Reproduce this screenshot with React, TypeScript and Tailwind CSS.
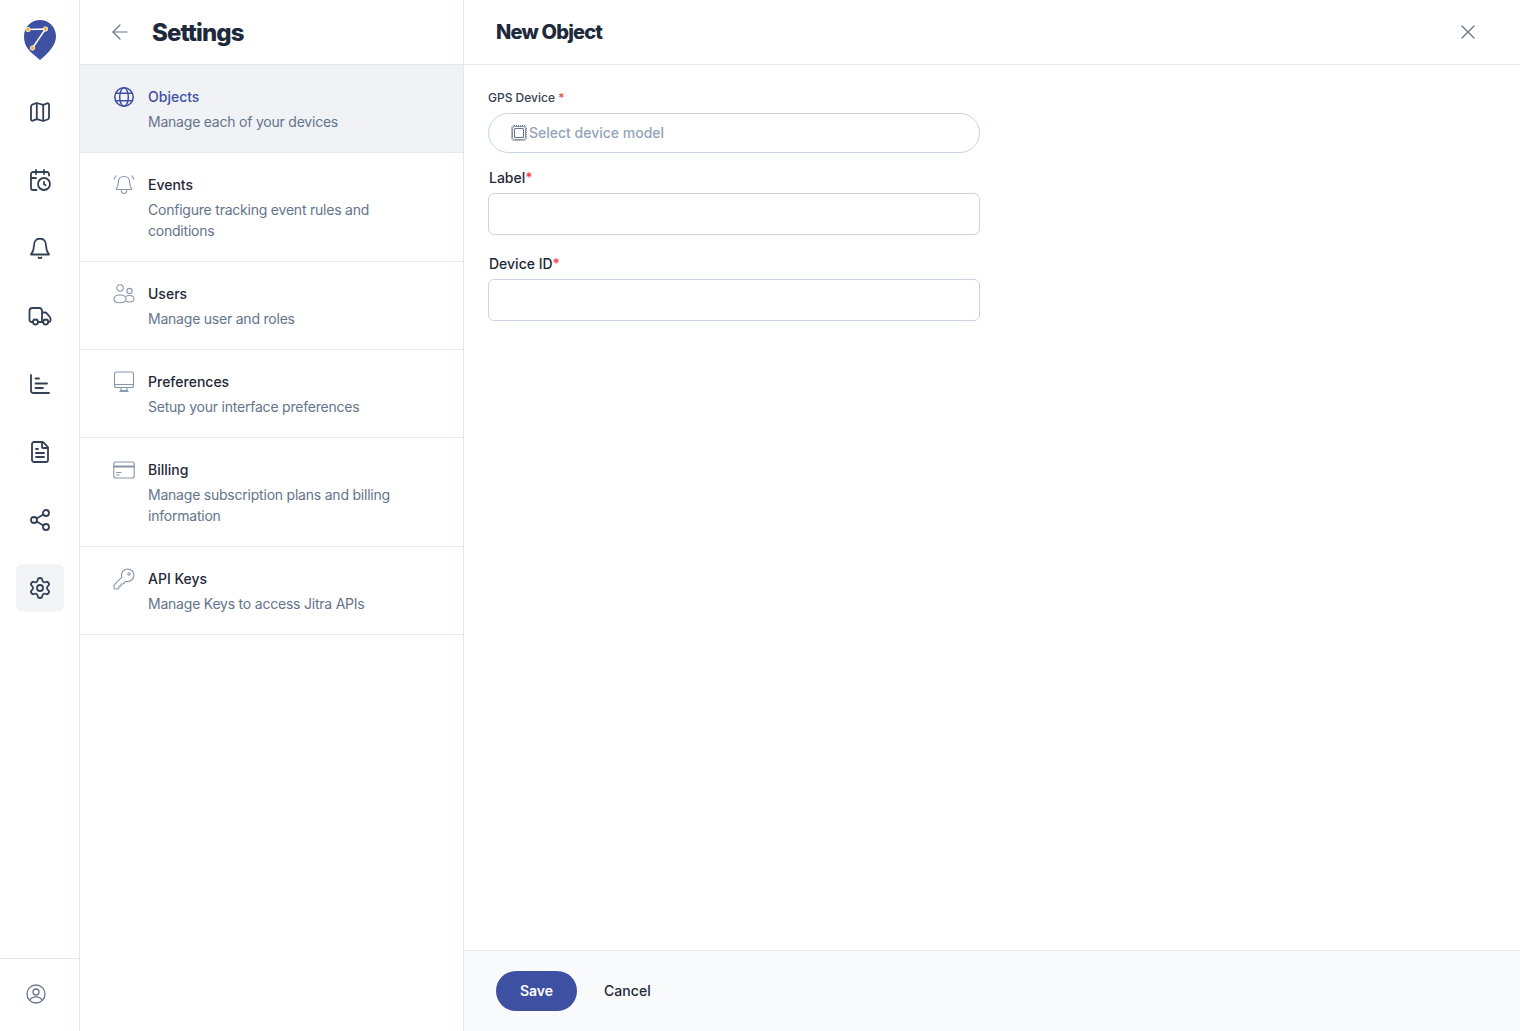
import React from "react";
import { ArrowLeft, CalendarClock, FileText, Settings, Share2, X } from "lucide-react";

const Logo = () => (
  <svg width="34" height="42" viewBox="0 0 34 42" className="block">
    <path d="M17 1C26 1 33 8 33 17.500C33 27 24 35 17 41C14 38 9 35 5 30C2 26 1 22 1 17.500C1 8 8 1 17 1Z" fill="#3e50a2" />
    <path d="M5 10.500L22.500 10L9.500 29" fill="none" stroke="#ffffff" strokeWidth="1.500" />
    <circle cx="5" cy="10.500" r="2.200" fill="#f9b233" stroke="#ffffff" strokeWidth="0.800" />
    <circle cx="22.500" cy="10" r="2.200" fill="#f9b233" stroke="#ffffff" strokeWidth="0.800" />
    <circle cx="9.500" cy="29" r="2.200" fill="#f9b233" stroke="#ffffff" strokeWidth="0.800" />
  </svg>
);

const MapIcon = () => (
  <svg width="24" height="24" viewBox="0 0 24 24" fill="none" stroke="#334155" strokeWidth="1.800" strokeLinejoin="round">
    <path d="M3 6.500C3 5.500 3.800 4.800 4.800 4.400L8.800 3L15.200 4.800L19.200 3.300C20.300 3 21 3.700 21 4.700V17.500C21 18.500 20.400 19.100 19.500 19.500L15.200 21L8.800 19.200L4.800 20.700C3.800 21 3 20.400 3 19.400Z" />
    <path d="M8.800 3V19.200M15.200 4.800V21" />
  </svg>
);

const BellIcon = () => (
  <svg width="24" height="24" viewBox="0 0 24 24" fill="none" stroke="#334155" strokeWidth="1.800" strokeLinecap="round" strokeLinejoin="round">
    <path d="M12 2.500C8.200 2.500 6 5.500 6 9.500C6 13.500 5 15.800 3 18.500H21C19 15.800 18 13.500 18 9.500C18 5.500 15.800 2.500 12 2.500Z" />
    <path d="M10.500 21.500C11.300 22.200 12.700 22.200 13.500 21.500" />
  </svg>
);

const TruckIcon = () => (
  <svg width="24" height="24" viewBox="0 0 24 24" fill="none" stroke="#334155" strokeWidth="1.800" strokeLinecap="round" strokeLinejoin="round">
    <path d="M4.500 18H3.500C2.400 18 1.500 17.100 1.500 16V7C1.500 5.300 2.800 4 4.500 4H11C12.700 4 14 5.300 14 7V18H10" />
    <path d="M14 8.500H16.800C17.800 8.500 18.500 8.900 19 9.600L21.800 13C22.300 13.600 22.500 14.200 22.500 15V16.500C22.500 17.400 21.800 18 21 18H20.500" />
    <path d="M14 18H15" />
    <circle cx="7.500" cy="18" r="2.500" />
    <circle cx="17.700" cy="18" r="2.500" />
  </svg>
);

const ChartIcon = () => (
  <svg width="24" height="24" viewBox="0 0 24 24" fill="none" stroke="#334155" strokeWidth="1.800" strokeLinecap="round">
    <path d="M3 3V18.500C3 20 4 21 5.500 21H21" />
    <path d="M7.500 6.500H11M7.500 11.500H19M7.500 16H15" />
  </svg>
);

const GlobeIcon = () => (
  <svg width="22" height="22" viewBox="0 0 22 22" fill="none" stroke="#3e50a2" strokeWidth="1.500">
    <circle cx="11" cy="11" r="9.200" />
    <ellipse cx="11" cy="11" rx="4.300" ry="9.200" />
    <path d="M2.800 7.300H19.200M2.800 14.700H19.200" />
  </svg>
);

const UsersIcon = () => (
  <svg width="22" height="20" viewBox="0 0 22 20" fill="none" stroke="#8795ad" strokeWidth="1.100">
    <circle cx="7" cy="4" r="3.200" />
    <circle cx="16.500" cy="7" r="2.600" />
    <path d="M7 11C3.500 11 1 12.500 1 15C1 17.500 3.500 18.800 7 18.800C10.500 18.800 13 17.500 13 15C13 12.500 10.500 11 7 11Z" />
    <path d="M13 12.400C14 11.700 15.200 11.500 16.500 11.500C19.300 11.500 21 12.800 21 14.800C21 16.800 19.300 18 16.500 18C15.200 18 14.100 17.800 13 17.200" />
  </svg>
);

const BellRingIcon = () => (
  <svg width="22" height="22" viewBox="0 0 22 22" fill="none" stroke="#8795ad" strokeWidth="1.100" strokeLinecap="round" strokeLinejoin="round">
    <path d="M11 2.500C7.500 2.500 5.300 5 5.300 8.500C5.300 11.500 4.500 13.500 3.200 15.500H18.800C17.500 13.500 16.700 11.500 16.700 8.500C16.700 5 14.500 2.500 11 2.500Z" />
    <path d="M8.200 15.800C8.200 18 9.400 19.500 11 19.500C12.600 19.500 13.800 18 13.800 15.800" />
    <path d="M1.200 5.200C1.500 3.800 2.100 2.700 3 1.800M20.800 5.200C20.500 3.800 19.900 2.700 19 1.800" />
  </svg>
);

const MonitorIcon = () => (
  <svg width="22" height="22" viewBox="0 0 22 22" fill="none" stroke="#8795ad" strokeWidth="1.100" strokeLinejoin="round">
    <rect x="1.500" y="1" width="19" height="15.500" rx="2" />
    <path d="M1.500 13.500H20.500" />
    <path d="M8.300 16.500L7.800 19.500H14.200L13.700 16.500" />
    <path d="M6.500 20.300H15.500" strokeWidth="1.300" />
  </svg>
);

const CardIcon = () => (
  <svg width="22" height="18" viewBox="0 0 22 18" fill="none" stroke="#8795ad" strokeWidth="1.100" strokeLinecap="round">
    <rect x="0.800" y="1" width="20.400" height="16" rx="2" />
    <path d="M0.800 5.500H21.200" strokeWidth="2" />
    <path d="M3.500 11.500H8M3.500 14H6" />
  </svg>
);

const KeyIcon = () => (
  <svg width="22" height="22" viewBox="0 0 22 22" fill="none" stroke="#8795ad" strokeWidth="1.100" strokeLinejoin="round">
    <path d="M14.500 1C11.200 1 8.500 3.700 8.500 7C8.500 7.800 8.600 8.500 8.900 9.200L1.500 16.600C1.200 16.900 1 17.300 1 17.800V20C1 20.600 1.400 21 2 21H4.200C4.700 21 5.100 20.800 5.400 20.500L6 19.900V18H8V16H10L12.800 13.200C13.500 13.400 14 13.500 14.500 13.500C17.800 13.500 21 10.300 21 7C21 3.700 17.800 1 14.500 1Z" />
    <circle cx="16" cy="6" r="1.200" />
  </svg>
);

const ChipIcon = () => (
  <svg width="16" height="16" viewBox="0 0 16 16" fill="none" stroke="#64748b" className="shrink-0">
    <rect x="0.500" y="0.500" width="15" height="15" rx="2.500" strokeWidth="1" strokeDasharray="1 1" />
    <rect x="1.500" y="1.500" width="13" height="13" rx="2" strokeWidth="0.800" />
    <rect x="3.500" y="3.500" width="9" height="9" rx="1" strokeWidth="1.100" />
  </svg>
);

const UserCircleIcon = () => (
  <svg width="20" height="20" viewBox="0 0 20 20" fill="none" stroke="#64748b" strokeWidth="1.300">
    <circle cx="10" cy="10" r="9" />
    <circle cx="10" cy="8" r="3" />
    <path d="M3.800 16.300C5 14 7.300 12.900 10 12.900C12.700 12.900 15 14 16.200 16.300" />
  </svg>
);

const railIcons = [
  <MapIcon />,
  <CalendarClock size={24} color="#334155" strokeWidth={1.800} />,
  <BellIcon />,
  <TruckIcon />,
  <ChartIcon />,
  <FileText size={24} color="#334155" strokeWidth={1.800} />,
  <Share2 size={24} color="#334155" strokeWidth={1.800} />,
];

const items = [
  { title: "Objects", desc: "Manage each of your devices", icon: <GlobeIcon />, active: true },
  { title: "Events", desc: "Configure tracking event rules and conditions", icon: <BellRingIcon /> },
  { title: "Users", desc: "Manage user and roles", icon: <UsersIcon /> },
  { title: "Preferences", desc: "Setup your interface preferences", icon: <MonitorIcon /> },
  { title: "Billing", desc: "Manage subscription plans and billing information", icon: <CardIcon /> },
  { title: "API Keys", desc: "Manage Keys to access Jitra APIs", icon: <KeyIcon /> },
];

const TextField = ({ label, className }: { label: string; className: string }) => (
  <div className={className}>
    <label className="ml-px block text-sm leading-[20px] font-medium text-[#1f2937]">
      {label}
      <span className="text-[#ef4444]">*</span>
    </label>
    <input className="mt-[5px] block h-[42px] w-[492px] rounded-md border border-[#cbd5e1] bg-white" />
  </div>
);

export default function App() {
  return (
    <div className="flex h-[1031px] w-[1520px] overflow-hidden bg-white font-['Inter',sans-serif]">
      {/* icon rail */}
      <aside className="flex w-[80px] shrink-0 flex-col justify-between border-r border-[#e2e8f0]">
        <div className="flex flex-col items-center">
          <div className="flex h-[64px] items-center justify-center pt-[16px]">
            <Logo />
          </div>
          <div className="mt-[24px] flex flex-col items-center gap-[20px]">
            {railIcons.map((icon, i) => (
              <div key={i} className="flex h-[48px] w-[48px] items-center justify-center">
                {icon}
              </div>
            ))}
            <div className="flex h-[48px] w-[48px] items-center justify-center rounded-md bg-[#f3f4f6]">
              <Settings size={24} color="#334155" strokeWidth={1.800} />
            </div>
          </div>
        </div>
        <div className="flex h-[73px] items-center border-t border-[#e2e8f0] pb-[2px] pl-[26px]">
          <UserCircleIcon />
        </div>
      </aside>

      {/* settings menu */}
      <nav className="w-[384px] shrink-0 border-r border-[#e2e8f0]">
        <div className="flex h-[65px] items-center border-b border-[#e2e8f0] pl-[28px]">
          <ArrowLeft size={24} color="#64748b" strokeWidth={1.200} />
          <h1 className="ml-[20px] pt-px text-[24px] font-extrabold tracking-[-0.9px] text-[#1e293b]">Settings</h1>
        </div>
        {items.map((item) => (
          <div
            key={item.title}
            className={`flex gap-[13px] border-b border-[#e2e8f0] pt-[21px] pr-[60px] pb-[20px] pl-[33px] ${item.active ? "bg-[#f1f2f6]" : ""}`}
          >
            <div className="flex h-[22px] w-[22px] shrink-0 items-center justify-center">{item.icon}</div>
            <div>
              <div className={`text-sm leading-[21px] font-medium ${item.active ? "text-[#3e50a2]" : "text-[#1f2937]"}`}>
                {item.title}
              </div>
              <div className="mt-[4px] text-sm leading-[21px] tracking-[-0.22px] text-[#64748b]">{item.desc}</div>
            </div>
          </div>
        ))}
      </nav>

      {/* new object form */}
      <main className="flex min-w-0 flex-1 flex-col">
        <div className="flex h-[65px] shrink-0 items-center justify-between border-b border-[#e2e8f0] pr-[40px] pl-[32px]">
          <h2 className="text-[20px] font-extrabold tracking-[-0.8px] text-[#1e293b]">New Object</h2>
          <X size={24} color="#64748b" strokeWidth={1.200} />
        </div>
        <div className="flex-1 pt-[25px] pl-[24px]">
          <label className="block text-xs leading-[16px] font-medium text-[#374151]">
            GPS Device <span className="text-[#ef4444]">*</span>
          </label>
          <div className="mt-[7px] flex h-[40px] w-[492px] items-center gap-[2px] rounded-full border border-[#cbd5e1] pl-[22px]">
            <ChipIcon />
            <span className="text-sm font-medium text-[#94a3b8]">Select device model</span>
          </div>
          <TextField label="Label" className="mt-[15px]" />
          <TextField label="Device ID" className="mt-[19px]" />
        </div>
        <div className="flex h-[81px] shrink-0 items-center border-t border-[#e2e8f0] bg-[#f9fafc] pl-[32px]">
          <button className="h-[40px] w-[81px] rounded-full bg-[#3e50a2] text-sm font-semibold text-white">Save</button>
          <button className="ml-[27px] text-sm font-medium tracking-[0.05px] text-[#1f2937]">Cancel</button>
        </div>
      </main>
    </div>
  );
}
